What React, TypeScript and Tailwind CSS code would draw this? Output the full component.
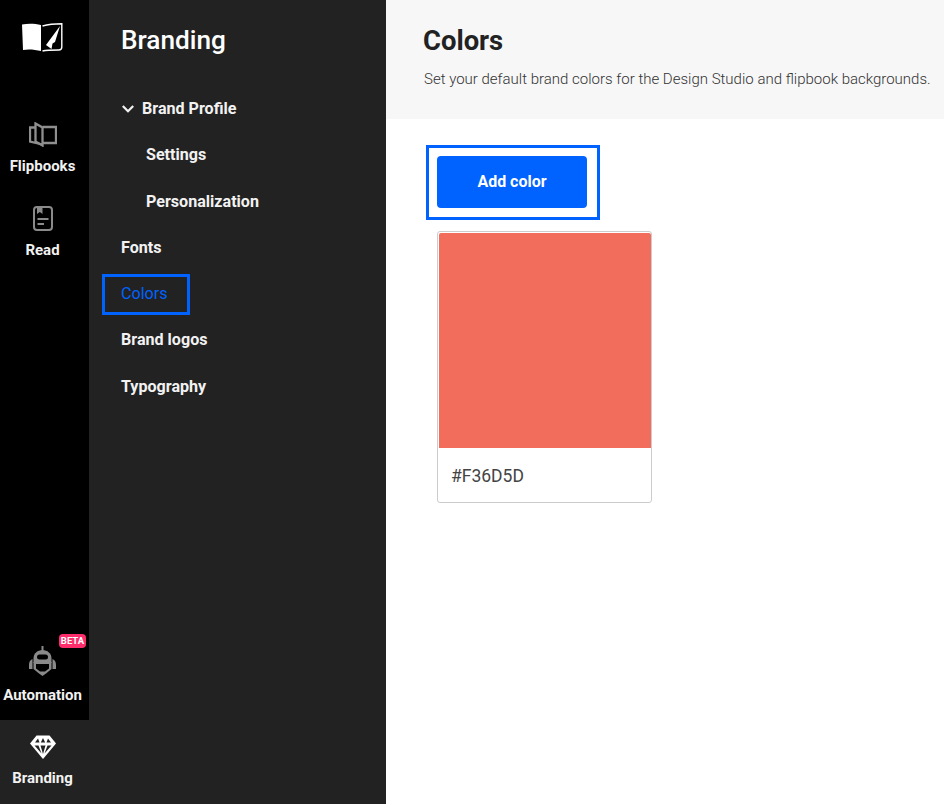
const font = "font-['Roboto',sans-serif]";

function LogoIcon() {
  return (
    <svg width="41" height="29" viewBox="0 0 41 29" fill="none">
      <path d="M0 1.500C6 .2 13 .5 19 2v26C13 26.500 6 26 1 27z" fill="#fff" />
      <path d="M20.500 3C26 1.500 33 .8 39.800 .8V24a3 3 0 0 1-3 3C31 27 25 27 20.500 28" stroke="#fff" strokeWidth="1.400" />
      <path d="M38 3 24 22l5.500 4 1-5.500 2.500-1.500z" fill="#fff" />
    </svg>
  );
}

function BookIcon() {
  return (
    <svg width="28" height="25" viewBox="0 0 28 25" fill="none" stroke="#8f8f8f" strokeWidth="2.300">
      <path d="M6.500 1.500 13.500 5.500V23.500L6.500 19.500z" />
      <path d="M13.500 5H27V21H13.500" />
      <path d="M6.500 5.500H1V19.500L13.500 22.500" />
    </svg>
  );
}

function ReadIcon() {
  return (
    <svg width="20" height="25" viewBox="0 0 20 25" fill="none">
      <rect x="1" y="1" width="18" height="23" rx="3" stroke="#8a8a8a" strokeWidth="2" />
      <path d="M4 1h5.500v7L6.800 6 4 8z" fill="#8a8a8a" />
      <path d="M4.500 13h11M4.500 18h6.500" stroke="#8a8a8a" strokeWidth="2" />
    </svg>
  );
}

function RobotIcon() {
  return (
    <svg width="27" height="30" viewBox="0 0 27 30" fill="#8a8a8a">
      <rect x="12.500" y="0" width="2" height="5" />
      <path d="M4.500 17V12.500C4.500 7.500 8.500 4 13.500 4S22.500 7.500 22.500 12.500V17z" />
      <rect x="8" y="8.500" width="11" height="5" rx="2.500" fill="#000" />
      <path d="M4.500 16h18v7l-5.500 4.500L13.500 30 10 27.500 4.500 23z" />
      <path d="M7 18h13v4.500L16 25.500h-5l-4-3z" fill="#000" />
      <path d="M3.500 13C1 14 0 16 0 19v4h3.500zM23.500 13c2.500 1 3.500 3 3.500 6v4h-3.500z" />
    </svg>
  );
}

function DiamondIcon() {
  return (
    <svg width="26" height="24" viewBox="0 0 26 24" fill="#fff">
      <path d="M6.500 .5h13L26 8.500 13 24 0 8.500z" />
      <path d="M8 3.500 5 7.500h4.500zM13 3 10.800 7.500h4.400zM18 3.500 16.500 7.500H21zM4.500 10.500h4l3 8zM10.500 10.500h5L13 19zM17.500 10.500h4l-7 8z" fill="#222222" />
    </svg>
  );
}

function RailItem({ label, icon, active, badge, className }: { label: string; icon: React.ReactNode; active?: boolean; badge?: boolean; className?: string }) {
  return (
    <div className={`relative flex h-[84px] flex-col items-center pr-[4px] ${active ? "bg-[#222222]" : ""} ${className ?? ""}`}>
      <div className="flex h-[39px] items-end">{icon}</div>
      <div className="mt-[10px] text-[15px] leading-[18px] font-bold text-[#f2f2f2]">{label}</div>
      {badge && (
        <span className="absolute top-[-2px] right-[3px] w-[27px] rounded-[4px] bg-[#ff2d6b] text-center text-[9.5px] leading-[14px] font-bold text-white">
          BETA
        </span>
      )}
    </div>
  );
}

const items = [
  { label: "Fonts" },
  { label: "Colors", active: true },
  { label: "Brand logos" },
  { label: "Typography" },
];

export default function App() {
  return (
    <div className={`flex h-[804px] w-[944px] overflow-hidden bg-white ${font}`}>
      <div className="flex w-[89px] shrink-0 flex-col bg-black">
        <div className="flex h-[108px] justify-center pt-[23px] pr-[5px]">
          <LogoIcon />
        </div>
        <RailItem label="Flipbooks" icon={<BookIcon />} />
        <RailItem label="Read" icon={<ReadIcon />} />
        <div className="flex-1" />
        <RailItem label="Automation" icon={<RobotIcon />} badge className="pt-[1px]" />
        <RailItem label="Branding" icon={<DiamondIcon />} active />
      </div>

      <div className="w-[297px] shrink-0 bg-[#222222] text-[#f2f2f2]">
        <h2 className="mt-[24px] ml-[32px] text-[26.2px] leading-[32px] font-medium text-white">Branding</h2>
        <div className="mt-[30px] text-[16.1px] font-bold">
          <div className="flex h-[46.25px] items-center pl-[32px]">
            <svg width="14" height="14" viewBox="0 0 14 14" fill="none" stroke="#f2f2f2" strokeWidth="2.200" className="mr-[7px]">
              <path d="M1.800 4 7 9.200 12.200 4" />
            </svg>
            Brand Profile
          </div>
          <div className="flex h-[46.25px] items-center pl-[57px]">Settings</div>
          <div className="flex h-[46.25px] items-center pl-[57px]">Personalization</div>
          {items.map((item) => (
            <div key={item.label} className="flex h-[46.25px] items-center pl-[32px]">
              {item.active ? (
                <span className="-ml-[19px] flex h-[41px] w-[88px] items-center border-[3px] border-[#0062ff] pl-[16px] font-normal text-[#0062ff]">
                  {item.label}
                </span>
              ) : (
                item.label
              )}
            </div>
          ))}
        </div>
      </div>

      <div className="flex-1">
        <div className="h-[119px] bg-[#f7f7f7] pt-[25px] pl-[37px]">
          <h1 className="text-[27.4px] leading-[32px] font-bold text-[#222222]">Colors</h1>
          <p className="mt-[11px] ml-[1px] whitespace-nowrap text-[15px] leading-[22px] font-light text-[#333333]">
            Set your default brand colors for the Design Studio and flipbook backgrounds.
          </p>
        </div>
        <div className="pt-[26px] pl-[40px]">
          <div className="h-[75px] w-[174px] border-[3px] border-[#0062ff] p-[8px]">
            <button className="h-[52px] w-[150px] rounded-[4px] bg-[#0062ff] text-[16px] font-bold text-white">Add color</button>
          </div>
          <div className="mt-[11px] ml-[11px] w-[215px] rounded-[3px] border border-[#cccccc] bg-white">
            <div className="mt-[1px] ml-[1px] h-[215px] rounded-t-[2px] bg-[#f36d5d]" />
            <div className="flex h-[54px] items-center pt-[2px] pl-[13px] text-[17.5px] text-[#444444]">#F36D5D</div>
          </div>
        </div>
      </div>
    </div>
  );
}
